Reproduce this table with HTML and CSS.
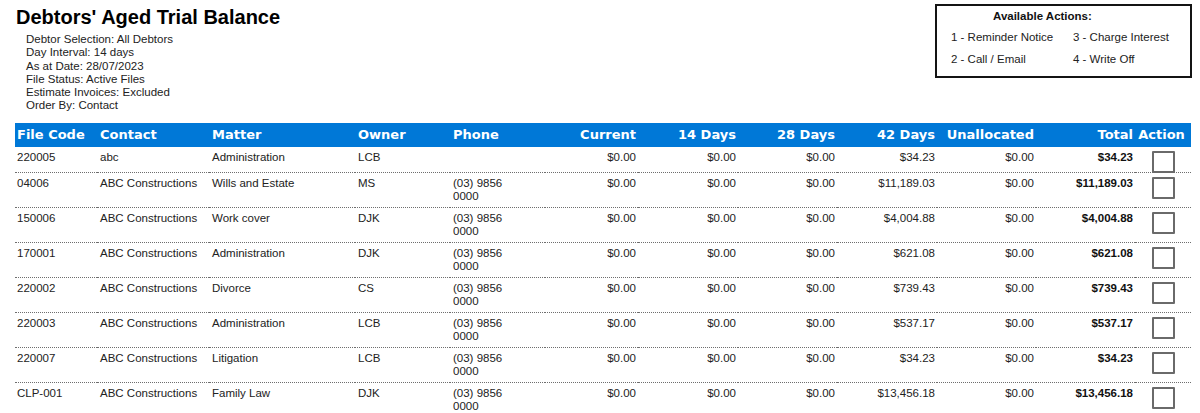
FILE: index.html
```html
<!DOCTYPE html>
<html>
<head>
<meta charset="utf-8">
<link rel="stylesheet" href="styles.css">
</head>
<body>
<div class="top">
  <div class="intro">
    <h1 class="title">Debtors' Aged Trial Balance</h1>
    <div class="info">
      <div>Debtor Selection: All Debtors</div>
      <div>Day Interval: 14 days</div>
      <div>As at Date: 28/07/2023</div>
      <div>File Status: Active Files</div>
      <div>Estimate Invoices: Excluded</div>
      <div>Order By: Contact</div>
    </div>
  </div>
  <div class="actions">
    <div class="actions-title">Available Actions:</div>
    <div class="actions-grid">
      <div>1 - Reminder Notice</div>
      <div>3 - Charge Interest</div>
      <div>2 - Call / Email</div>
      <div>4 - Write Off</div>
    </div>
  </div>
</div>

<table class="report">
  <colgroup>
    <col class="c-code"><col class="c-contact"><col class="c-matter"><col class="c-owner"><col class="c-phone">
    <col class="c-cur"><col class="c-14"><col class="c-28"><col class="c-42"><col class="c-unal"><col class="c-total"><col class="c-action">
  </colgroup>
  <thead>
    <tr>
      <th>File Code</th><th>Contact</th><th>Matter</th><th>Owner</th><th>Phone</th>
      <th class="num">Current</th><th class="num">14 Days</th><th class="num">28 Days</th><th class="num">42 Days</th>
      <th class="num">Unallocated</th><th class="num">Total</th><th class="act">Action</th>
    </tr>
  </thead>
  <tbody>
    <tr>
      <td>220005</td><td>abc</td><td>Administration</td><td>LCB</td><td></td>
      <td class="num">$0.00</td><td class="num">$0.00</td><td class="num">$0.00</td><td class="num">$34.23</td><td class="num">$0.00</td><td class="num total">$34.23</td><td class="act"><span class="box"></span></td>
    </tr>
    <tr>
      <td>04006</td><td>ABC Constructions</td><td>Wills and Estate</td><td>MS</td><td>(03) 9856<br>0000</td>
      <td class="num">$0.00</td><td class="num">$0.00</td><td class="num">$0.00</td><td class="num">$11,189.03</td><td class="num">$0.00</td><td class="num total">$11,189.03</td><td class="act"><span class="box"></span></td>
    </tr>
    <tr>
      <td>150006</td><td>ABC Constructions</td><td>Work cover</td><td>DJK</td><td>(03) 9856<br>0000</td>
      <td class="num">$0.00</td><td class="num">$0.00</td><td class="num">$0.00</td><td class="num">$4,004.88</td><td class="num">$0.00</td><td class="num total">$4,004.88</td><td class="act"><span class="box"></span></td>
    </tr>
    <tr>
      <td>170001</td><td>ABC Constructions</td><td>Administration</td><td>DJK</td><td>(03) 9856<br>0000</td>
      <td class="num">$0.00</td><td class="num">$0.00</td><td class="num">$0.00</td><td class="num">$621.08</td><td class="num">$0.00</td><td class="num total">$621.08</td><td class="act"><span class="box"></span></td>
    </tr>
    <tr>
      <td>220002</td><td>ABC Constructions</td><td>Divorce</td><td>CS</td><td>(03) 9856<br>0000</td>
      <td class="num">$0.00</td><td class="num">$0.00</td><td class="num">$0.00</td><td class="num">$739.43</td><td class="num">$0.00</td><td class="num total">$739.43</td><td class="act"><span class="box"></span></td>
    </tr>
    <tr>
      <td>220003</td><td>ABC Constructions</td><td>Administration</td><td>LCB</td><td>(03) 9856<br>0000</td>
      <td class="num">$0.00</td><td class="num">$0.00</td><td class="num">$0.00</td><td class="num">$537.17</td><td class="num">$0.00</td><td class="num total">$537.17</td><td class="act"><span class="box"></span></td>
    </tr>
    <tr>
      <td>220007</td><td>ABC Constructions</td><td>Litigation</td><td>LCB</td><td>(03) 9856<br>0000</td>
      <td class="num">$0.00</td><td class="num">$0.00</td><td class="num">$0.00</td><td class="num">$34.23</td><td class="num">$0.00</td><td class="num total">$34.23</td><td class="act"><span class="box"></span></td>
    </tr>
    <tr>
      <td>CLP-001</td><td>ABC Constructions</td><td>Family Law</td><td>DJK</td><td>(03) 9856<br>0000</td>
      <td class="num">$0.00</td><td class="num">$0.00</td><td class="num">$0.00</td><td class="num">$13,456.18</td><td class="num">$0.00</td><td class="num total">$13,456.18</td><td class="act"><span class="box"></span></td>
    </tr>
  </tbody>
</table>
</body>
</html>
```

FILE: styles.css
```css
html, body {
  margin: 0;
  padding: 0;
  background: #ffffff;
}

body {
  font-family: "Liberation Sans", Arial, sans-serif;
  font-size: 11.5px;
  color: #222222;
}

.top {
  display: flex;
  justify-content: space-between;
  align-items: flex-start;
  height: 123px;
}

.intro {
  padding-left: 16px;
}

.title {
  margin: 0;
  padding-top: 5px;
  font-size: 20px;
  line-height: 24px;
  font-weight: bold;
  color: #000000;
}

.info {
  margin-top: 4px;
  padding-left: 10px;
  line-height: 13.3px;
}

.actions {
  margin-top: 4px;
  margin-right: 8px;
  width: 253px;
  border: 2px solid #141414;
  padding-bottom: 6px;
}

.actions-title {
  font-weight: bold;
  line-height: 20px;
  padding-left: 56px;
  color: #111111;
}

.actions-grid {
  display: grid;
  grid-template-columns: 122px auto;
  padding-left: 14px;
  line-height: 22px;
}

.report {
  margin-left: 15px;
  width: 1176px;
  border-collapse: collapse;
  table-layout: fixed;
}

.c-code { width: 82px; }
.c-contact { width: 112px; }
.c-matter { width: 146px; }
.c-owner { width: 95px; }
.c-phone { width: 95px; }
.c-cur { width: 93px; }
.c-14 { width: 100px; }
.c-28 { width: 99px; }
.c-42 { width: 100px; }
.c-unal { width: 99px; }
.c-total { width: 99px; }
.c-action { width: 56px; }

.report th {
  background: #0078d7;
  color: #ffffff;
  font-family: "DejaVu Sans", Verdana, sans-serif;
  font-weight: bold;
  font-size: 13px;
  line-height: 24px;
  height: 24px;
  padding: 0 2px 0 2px;
  text-align: left;
  white-space: nowrap;
}

.report th:nth-child(n+2) {
  padding-left: 3px;
}

.report th.act {
  text-align: center;
  padding: 0 3px 0 0;
}

.report td {
  padding: 4px 2px 4px 3px;
  line-height: 13px;
  vertical-align: top;
  white-space: nowrap;
  border-bottom: 1px dotted #6e6e6e;
}

.report td:first-child {
  padding-left: 2px;
}

.report .num {
  text-align: right;
  padding-right: 2px;
}

.report .total {
  font-weight: bold;
  color: #111111;
}

.report td.act {
  text-align: center;
  padding: 4px 0 0 0;
  line-height: 0;
}

.box {
  display: inline-block;
  box-sizing: border-box;
  width: 23px;
  height: 22px;
  margin-bottom: -1px;
  border: 2px solid #6a6a6a;
  border-radius: 1px;
  vertical-align: top;
}
```
